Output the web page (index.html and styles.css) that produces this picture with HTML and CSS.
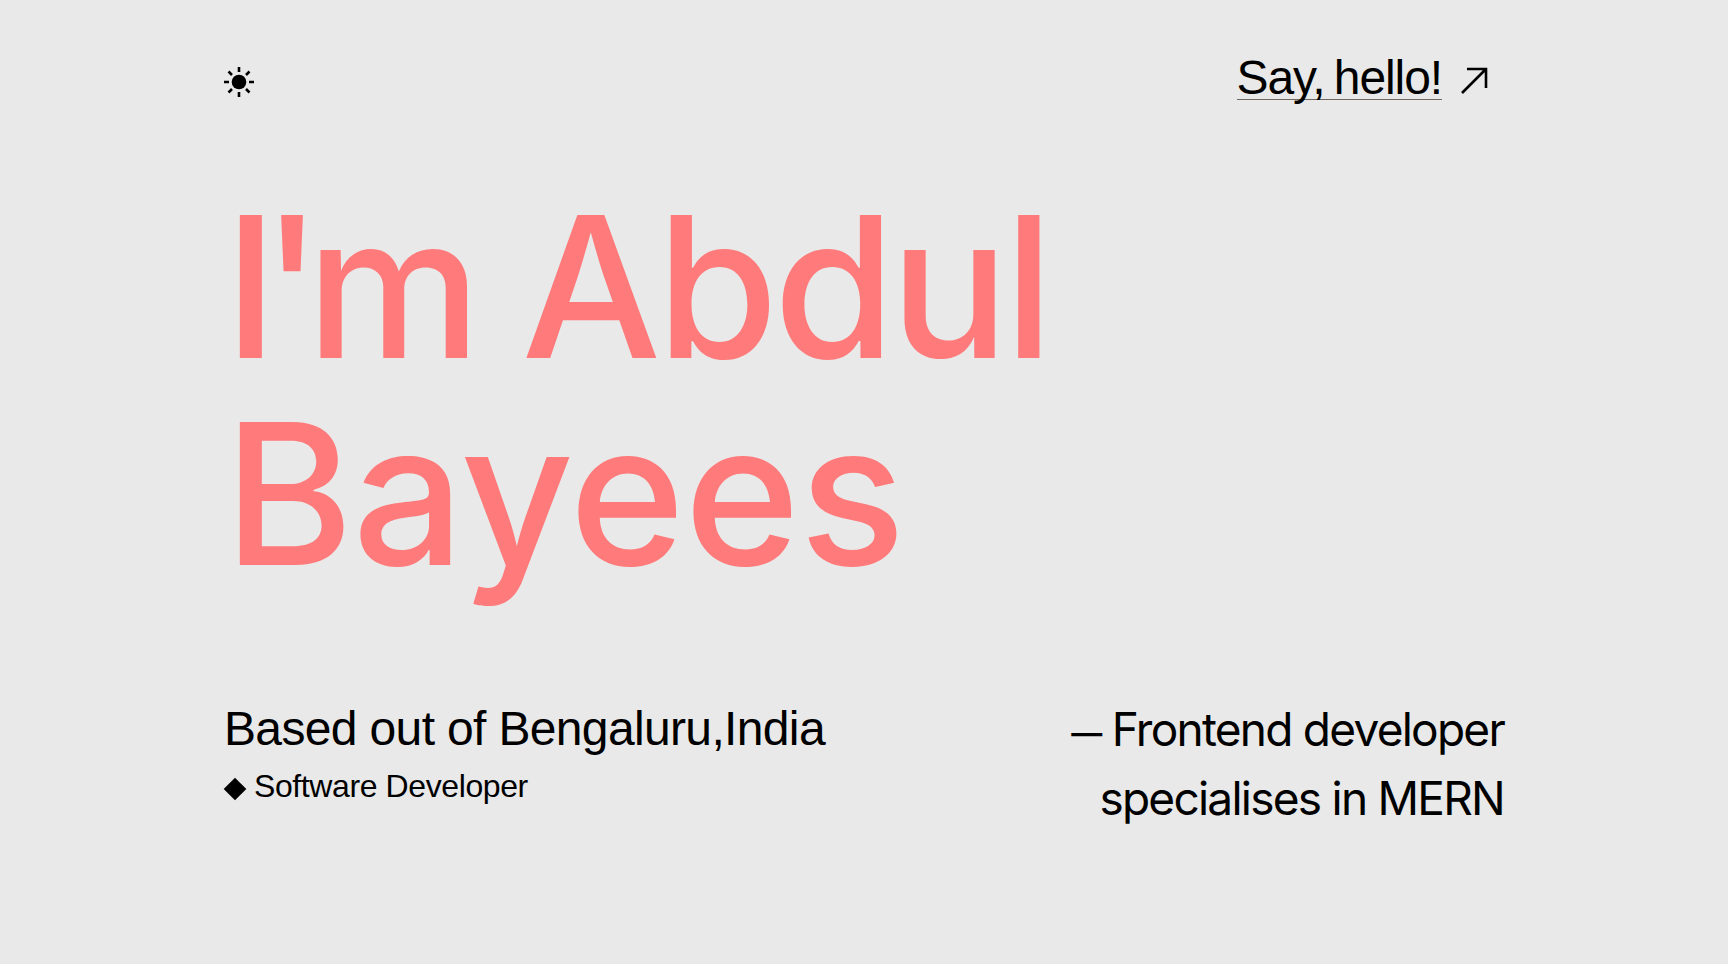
FILE: index.html
```html
<!DOCTYPE html>
<html lang="en">
<head>
    <meta charset="UTF-8">
    <meta name="viewport" content="width=device-width, initial-scale=1.0">
    <title>Abdul Bayees</title>
    <link rel="stylesheet" href="styles.css">
</head>
<body>
    <div class="page">
        <header class="topbar">
            <button class="theme-toggle" type="button" aria-label="Toggle theme">
                <svg width="32" height="32" viewBox="0 0 32 32" fill="none" stroke="#000" stroke-width="2.6">
                    <circle cx="16" cy="16" r="7.3" fill="#000" stroke="none"/>
                    <path d="M16 1v5M16 26v5M1 16h5M26 16h5M5.5 5.5L9 9M23 23l3.5 3.5M5.5 26.5L9 23M23 9l3.5-3.5"/>
                </svg>
            </button>
            <a class="hello" href="#">
                <span class="hello-text">Say, hello!</span>
                <svg width="32" height="32" viewBox="0 0 32 32" fill="none" stroke="#000" stroke-width="2.6">
                    <path d="M4 29L28 5M9 5h19v19"/>
                </svg>
            </a>
        </header>

        <h1 class="title">
            <span class="title-first"><span class="title-im">I'm</span> Abdul</span>
            <span class="title-second">Bayees</span>
        </h1>

        <section class="info">
            <div class="info-left">
                <p class="location">Based out of Bengaluru,India</p>
                <p class="role"><span class="diamond"></span>Software Developer</p>
            </div>
            <p class="info-right"><span class="dash">—</span> Frontend developer<br>specialises in MERN</p>
        </section>
    </div>
</body>
</html>
```

FILE: styles.css
```css
/* Landing page */
html,
body {
    height: 100%;
}
body {
    margin: 0;
    background-color: #e9e9e9;
    color: #000;
    font-family: "Liberation Sans", Arial, sans-serif;
}
p {
    margin: 0;
}
.page {
    box-sizing: border-box;
    height: 964px;
    padding: 48px 224px 0;
    overflow: hidden;
}
.topbar {
    display: flex;
    justify-content: space-between;
    align-items: center;
    height: 64px;
}
.theme-toggle {
    display: flex;
    margin: 4px 0 0 -1px;
    padding: 0;
    background: none;
    border: none;
    cursor: pointer;
}
.hello {
    display: flex;
    align-items: center;
    gap: 16px;
    color: #000;
    text-decoration: none;
    margin-right: 14px;
    font-size: 48px;
    letter-spacing: -1.1px;
    word-spacing: -3px;
}
.hello-text {
    line-height: 42px;
    margin-bottom: 4px;
    border-bottom: 1px solid #70685f;
}
.title {
    margin: 71px 0 0 0;
    font-family: Inter, "Liberation Sans", sans-serif;
    font-size: 197px;
    font-weight: 500;
    line-height: 207px;
    color: #ff7a7a;
}
.title-first,
.title-second {
    display: block;
}
.title-first {
    letter-spacing: -4.8px;
    word-spacing: 9px;
}
.title-im {
    letter-spacing: -16.5px;
}
.title-second {
    letter-spacing: -0.8px;
}
.info {
    display: flex;
    justify-content: space-between;
    margin-top: 104px;
}
.location {
    font-size: 48px;
    line-height: 56px;
    letter-spacing: -0.65px;
}
.role {
    display: flex;
    align-items: center;
    margin-top: 9px;
    font-size: 32px;
    line-height: 40px;
    letter-spacing: -0.4px;
}
.diamond {
    width: 16px;
    height: 16px;
    margin: 6px 11px 0 3px;
    background-color: #000;
    transform: rotate(45deg);
}
.info-right {
    margin-top: -6px;
    font-family: Inter, "Liberation Sans", sans-serif;
    font-size: 46px;
    line-height: 69px;
    text-align: right;
    letter-spacing: -1.75px;
}
.dash {
    font-size: 31px;
    font-weight: 600;
    line-height: 1;
    vertical-align: 2px;
}
```
